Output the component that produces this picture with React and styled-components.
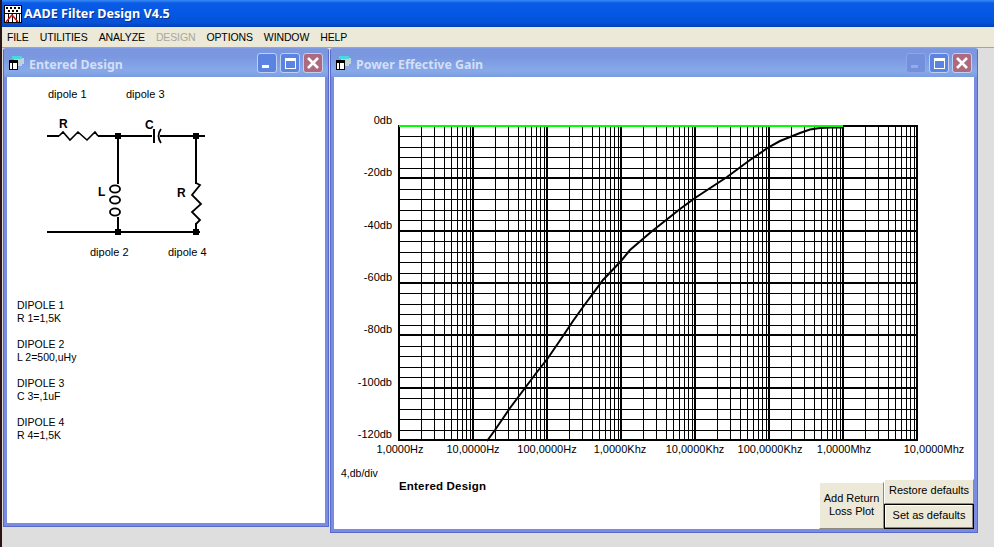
import React from "react";
import styled, { createGlobalStyle } from "styled-components";

const GlobalStyle = createGlobalStyle`
	html, body {
		margin: 0;
		padding: 0;
		background: #dedede;
		overflow: hidden;
	}
	#root {
		width: 994px;
		height: 547px;
	}
`;

const uiFont = `"Liberation Sans", Arial, sans-serif`;
const titleFont = `"Noto Sans", "DejaVu Sans", sans-serif`;

const Desktop = styled.div`
	display: flex;
	width: 994px;
	height: 547px;
	background: #dedede;
	font-family: ${uiFont};
	color: #000;
	overflow: hidden;
`;

const DesktopEdge = styled.div`
	width: 2px;
	flex: none;
	background: #2a1416;
`;

const AppFrame = styled.div`
	flex: 1;
	display: flex;
	flex-direction: column;
	min-width: 0;
`;

const TitleBar = styled.div`
	height: 27px;
	display: flex;
	align-items: center;
	gap: 2px;
	padding-left: 2px;
	background: linear-gradient(180deg, #3b8cf5 0, #0a5be6 3px, #0558e4 14px, #0650d6 23px, #0340b8 27px);
	color: #fff;
	font-family: ${titleFont};
	font-size: 12.6px;
	font-weight: 700;
	text-shadow: 1px 1px 0 #0a2f90;
`;

const MenuBar = styled.div`
	height: 20px;
	display: flex;
	align-items: center;
	gap: 11px;
	padding-left: 5px;
	background: #ece9d8;
	border-bottom: 1px solid #a8a498;
	font-size: 10.5px;
`;

const MenuItem = styled.span`
	color: ${(p) => (p.$disabled ? "#a9a79c" : "#000")};
	letter-spacing: -0.12px;
`;

const Workspace = styled.div`
	flex: 1;
	display: flex;
	align-items: flex-start;
	gap: 1px;
	padding-left: 1px;
	min-height: 0;
`;

const Window = styled.section`
	flex: none;
	width: ${(p) => p.$width}px;
	height: ${(p) => p.$height}px;
	display: flex;
	flex-direction: column;
	box-sizing: border-box;
	padding: 0 3px 3px;
	background: #7a8ce2;
	border: 1px solid #5a6acb;
	border-top-color: #7f9be2;
	border-radius: 3px 3px 0 0;
`;

const WindowHead = styled.header`
	height: 28px;
	flex: none;
	display: flex;
	align-items: center;
	margin: 0 -3px;
	padding: 0 5px 0 4px;
	background: linear-gradient(180deg, #7b96de 0, #7a98e0 8px, #87a9e8 22px, #7c9ce2 28px);
	color: #d4dff6;
	font-family: ${titleFont};
	font-size: 12.4px;
	font-weight: 700;
`;

const HeadTitle = styled.span`
	flex: 1;
	margin-left: 4px;
	padding-top: 2px;
`;

const CaptionGroup = styled.div`
	display: flex;
	gap: 3px;
`;

const captionColor = { min: "#5b84e2", max: "#5b84e2", close: "#ad6a7e", off: "#7390dc" };

const CaptionButton = styled.div`
	width: 20px;
	height: 20px;
	display: flex;
	align-items: center;
	justify-content: center;
	box-sizing: border-box;
	border: 1px solid ${(p) => (p.$kind === "off" ? "#8ba6e6" : "#c0d0f2")};
	border-radius: 3px;
	background: ${(p) => captionColor[p.$kind]};
`;

const Client = styled.div`
	flex: 1;
	display: flex;
	flex-direction: column;
	min-height: 0;
	background: #fff;
`;

const Schematic = styled.svg`
	display: block;
	flex: none;
`;

const ValueList = styled.div`
	display: flex;
	flex-direction: column;
	gap: 13px;
	padding: 28px 0 0 10px;
	font-size: 10.5px;
	line-height: 13px;
`;

const ValueBlock = styled.div`
	display: flex;
	flex-direction: column;
`;

const ChartSvg = styled.svg`
	display: block;
	flex: none;
`;

const ChartFoot = styled.div`
	flex: 1;
	display: flex;
	align-items: flex-end;
	justify-content: space-between;
	min-height: 0;
`;

const Notes = styled.div`
	display: flex;
	flex-direction: column;
	align-self: flex-start;
	padding: 11px 0 0 7px;
	font-size: 10.5px;
	line-height: 13px;
`;

const SeriesName = styled.strong`
	margin: 0 0 0 58px;
	font-size: 11.5px;
	letter-spacing: 0.2px;
`;

const ButtonPanel = styled.div`
	display: flex;
	align-items: flex-end;
`;

const ButtonStack = styled.div`
	display: flex;
	flex-direction: column;
`;

const PlotButton = styled.button`
	box-sizing: border-box;
	width: ${(p) => p.$width}px;
	height: ${(p) => p.$height}px;
	padding: 0 0 2px;
	background: #ece9d8;
	border: 1px solid ${(p) => (p.$primary ? "#000" : "#8d8b80")};
	border-top-color: ${(p) => (p.$primary ? "#000" : "#fff")};
	border-left-color: ${(p) => (p.$primary ? "#000" : "#fff")};
	box-shadow: ${(p) => (p.$primary ? "inset -1px -1px 0 #8d8b80, inset 1px 1px 0 #fff" : "none")};
	font-family: ${uiFont};
	font-size: 11px;
	line-height: 13px;
	color: #000;
`;

// app icon, a little chart with dotted header
const AppIcon = () => (
	<svg width="18" height="18" viewBox="0 0 18 18" shapeRendering="crispEdges">
		<rect width="18" height="18" fill="#000" />
		<rect x="1" y="1" width="16" height="7" fill="#fff" />
		<path d="M2 2h2v2H2zM6 2h2v2H6zM10 2h2v2h-2zM14 2h2v2h-2zM4 5h2v2H4zM8 5h2v2H8zM12 5h2v2h-2z" fill="#000" />
		<rect x="1" y="9" width="16" height="8" fill="#fff" />
		<path d="M4 9v8M8 9v8M12 9v8M15 9v8" stroke="#000" />
		<path d="M2 17 8 10l6 7" stroke="#e01010" strokeWidth="1.5" fill="none" shapeRendering="auto" />
	</svg>
);

const ChildIcon = () => (
	<svg width="17" height="15" viewBox="0 0 17 15" shapeRendering="crispEdges">
		<path d="M4 0h10v2h2v6h-2v2H9z" fill="#c4d0d6" />
		<rect x="4" y="0" width="10" height="3" fill="#48d8e0" />
		<rect x="1.5" y="4.5" width="8" height="9" fill="#fff" stroke="#000" />
		<rect x="1" y="4" width="9" height="3" fill="#000" />
		<rect x="4" y="7" width="1" height="7" fill="#000" />
	</svg>
);

const MinGlyph = ({ off }) => (
	<svg width="12" height="12" viewBox="0 0 12 12" shapeRendering="crispEdges">
		<rect x="1" y="8" width="7" height="3" fill={off ? "#97abe4" : "#fff"} />
	</svg>
);

const MaxGlyph = () => (
	<svg width="13" height="13" viewBox="0 0 13 13" shapeRendering="crispEdges">
		<path d="M1.5 1.5h10v10h-10z" fill="none" stroke="#fff" />
		<rect x="1" y="1" width="11" height="3" fill="#fff" />
	</svg>
);

const CloseGlyph = () => (
	<svg width="14" height="14" viewBox="0 0 14 14">
		<path d="M2 2l10 10M12 2L2 12" stroke="#fff" strokeWidth="2.6" fill="none" />
	</svg>
);

const Captions = ({ minOff }) => (
	<CaptionGroup>
		<CaptionButton $kind={minOff ? "off" : "min"}>
			<MinGlyph off={minOff} />
		</CaptionButton>
		<CaptionButton $kind="max">
			<MaxGlyph />
		</CaptionButton>
		<CaptionButton $kind="close">
			<CloseGlyph />
		</CaptionButton>
	</CaptionGroup>
);

const dipoles = [
	["DIPOLE 1", "R 1=1,5K"],
	["DIPOLE 2", "L 2=500,uHy"],
	["DIPOLE 3", "C 3=,1uF"],
	["DIPOLE 4", "R 4=1,5K"],
];

const nodes = [
	[118, 136],
	[196, 136],
	[118, 232],
	[196, 232],
];

// svg uses screen coordinates through the viewBox so it lines up with the capture
const Circuit = () => (
	<Schematic width="318" height="194" viewBox="7 77 318 194">
		<g fontFamily={uiFont} fontSize="11" fill="#000" style={{ whiteSpace: "pre" }}>
			<text x="48" y="98">dipole  1</text>
			<text x="126" y="98">dipole  3</text>
			<text x="90" y="256">dipole  2</text>
			<text x="168" y="256">dipole  4</text>
		</g>
		<g fontFamily={uiFont} fontSize="12" fontWeight="700" fill="#000">
			<text x="59" y="128">R</text>
			<text x="145" y="129">C</text>
			<text x="98" y="196">L</text>
			<text x="177" y="197">R</text>
		</g>
		<g stroke="#000" fill="none" shapeRendering="crispEdges" strokeWidth="2">
			<path d="M47 136H59M98 136H152M160 136H205M47 232H200M118 136V184M118 217V232M196 136V184M196 223V232" />
		</g>
		<g stroke="#000" fill="none" strokeWidth="1.6">
			<path d="M59 136l4-4 7 8 8-8 9 8 8-8 3 4" />
			<path d="M196 183l4 2-8 10 9 9-9 8 8 8-4 4" strokeWidth="1.8" />
			<path d="M154 129V143" strokeWidth="2" />
			<path d="M161 129Q156 136 161 143" strokeWidth="1.8" />
			<ellipse cx="115" cy="189" rx="5" ry="3.6" strokeWidth="1.9" />
			<ellipse cx="115" cy="200" rx="5" ry="3.6" strokeWidth="1.9" />
			<ellipse cx="115" cy="212" rx="5" ry="3.6" strokeWidth="1.9" />
		</g>
		{nodes.map(([x, y]) => (
			<rect key={`${x}-${y}`} x={x - 3} y={y - 3} width="6" height="6" fill="#000" />
		))}
	</Schematic>
);

const LEFT = 399;
const DECADE = 74;
const TOP = 126;
const BOTTOM = 440;
const STEP = (BOTTOM - TOP) / 30;

const freqLabels = [
	["1,0000Hz", 400],
	["10,0000Hz", 473],
	["100,0000Hz", 547],
	["1,0000Khz", 620],
	["10,0000Khz", 695],
	["100,0000Khz", 770],
	["1,0000Mhz", 844],
	["10,0000Mhz", 934],
];

const curve =
	"M487 441L495 430L510 408L525 388L537 372L548 358L563 336L573 321L583 307L603 280L621 261L630 250L651 232L680 209L695 198L727 177L750 160L769 147L780 141L790 137L800 133L810 129.5L820 128L830 127.5L843 127.5";

const Chart = () => {
	const vertical = [];
	for (let d = 0; d < 7; d++) {
		for (let k = 2; k < 10; k++) {
			vertical.push(Math.round(LEFT + DECADE * (d + Math.log10(k))));
		}
	}
	const horizontal = [];
	for (let i = 1; i < 30; i++) {
		if (i % 5) horizontal.push(Math.round(TOP + i * STEP));
	}
	return (
		<ChartSvg width="640" height="379" viewBox="334 77 640 379">
			<g stroke="#000" strokeWidth="1" shapeRendering="crispEdges">
				{vertical.map((x) => (
					<line key={x} x1={x + 0.5} x2={x + 0.5} y1={TOP} y2={BOTTOM} />
				))}
				{horizontal.map((y) => (
					<line key={y} x1={LEFT} x2={917} y1={y + 0.5} y2={y + 0.5} />
				))}
			</g>
			<g stroke="#000" strokeWidth="2" shapeRendering="crispEdges">
				{[1, 2, 3, 4, 5, 6].map((d) => (
					<line key={d} x1={LEFT + d * DECADE} x2={LEFT + d * DECADE} y1={TOP} y2={BOTTOM} />
				))}
				{[1, 2, 3, 4, 5].map((i) => (
					<line key={i} x1={LEFT} x2={917} y1={Math.round(TOP + i * 5 * STEP)} y2={Math.round(TOP + i * 5 * STEP)} />
				))}
				<rect x={LEFT} y={TOP} width={917 - LEFT} height={BOTTOM - TOP} fill="none" />
			</g>
			<path d={curve} fill="none" stroke="#000" strokeWidth="2" />
			<line x1={LEFT} x2={843} y1={126} y2={126} stroke="#00ff00" strokeWidth="2" shapeRendering="crispEdges" />
			<g fontFamily={uiFont} fontSize="11" fill="#000">
				{[0, 20, 40, 60, 80, 100, 120].map((v, i) => (
					<text key={v} x="392" y={TOP + i * 5 * STEP - 2} textAnchor="end">
						{v === 0 ? "0db" : `-${v}db`}
					</text>
				))}
				{freqLabels.map(([label, x]) => (
					<text key={label} x={x} y="453" textAnchor="middle">
						{label}
					</text>
				))}
			</g>
		</ChartSvg>
	);
};

const App = () => (
	<Desktop>
		<GlobalStyle />
		<DesktopEdge />
		<AppFrame>
			<TitleBar>
				<AppIcon />
				<span>AADE Filter Design V4.5</span>
			</TitleBar>
			<MenuBar>
				<MenuItem>FILE</MenuItem>
				<MenuItem>UTILITIES</MenuItem>
				<MenuItem>ANALYZE</MenuItem>
				<MenuItem $disabled>DESIGN</MenuItem>
				<MenuItem>OPTIONS</MenuItem>
				<MenuItem>WINDOW</MenuItem>
				<MenuItem>HELP</MenuItem>
			</MenuBar>
			<Workspace>
				<Window $width={326} $height={479}>
					<WindowHead>
						<ChildIcon />
						<HeadTitle>Entered Design</HeadTitle>
						<Captions />
					</WindowHead>
					<Client>
						<Circuit />
						<ValueList>
							{dipoles.map(([name, value]) => (
								<ValueBlock key={name}>
									<span>{name}</span>
									<span>{value}</span>
								</ValueBlock>
							))}
						</ValueList>
					</Client>
				</Window>
				<Window $width={648} $height={485}>
					<WindowHead>
						<ChildIcon />
						<HeadTitle>Power Effective Gain</HeadTitle>
						<Captions minOff />
					</WindowHead>
					<Client>
						<Chart />
						<ChartFoot>
							<Notes>
								<span>4,db/div</span>
								<SeriesName>Entered Design</SeriesName>
							</Notes>
							<ButtonPanel>
								<PlotButton $width={65} $height={47}>
									Add Return
									<br />
									Loss Plot
								</PlotButton>
								<ButtonStack>
									<PlotButton $width={90} $height={25}>Restore defaults</PlotButton>
									<PlotButton $width={90} $height={25} $primary>Set as defaults</PlotButton>
								</ButtonStack>
							</ButtonPanel>
						</ChartFoot>
					</Client>
				</Window>
			</Workspace>
		</AppFrame>
	</Desktop>
);

export default App;
